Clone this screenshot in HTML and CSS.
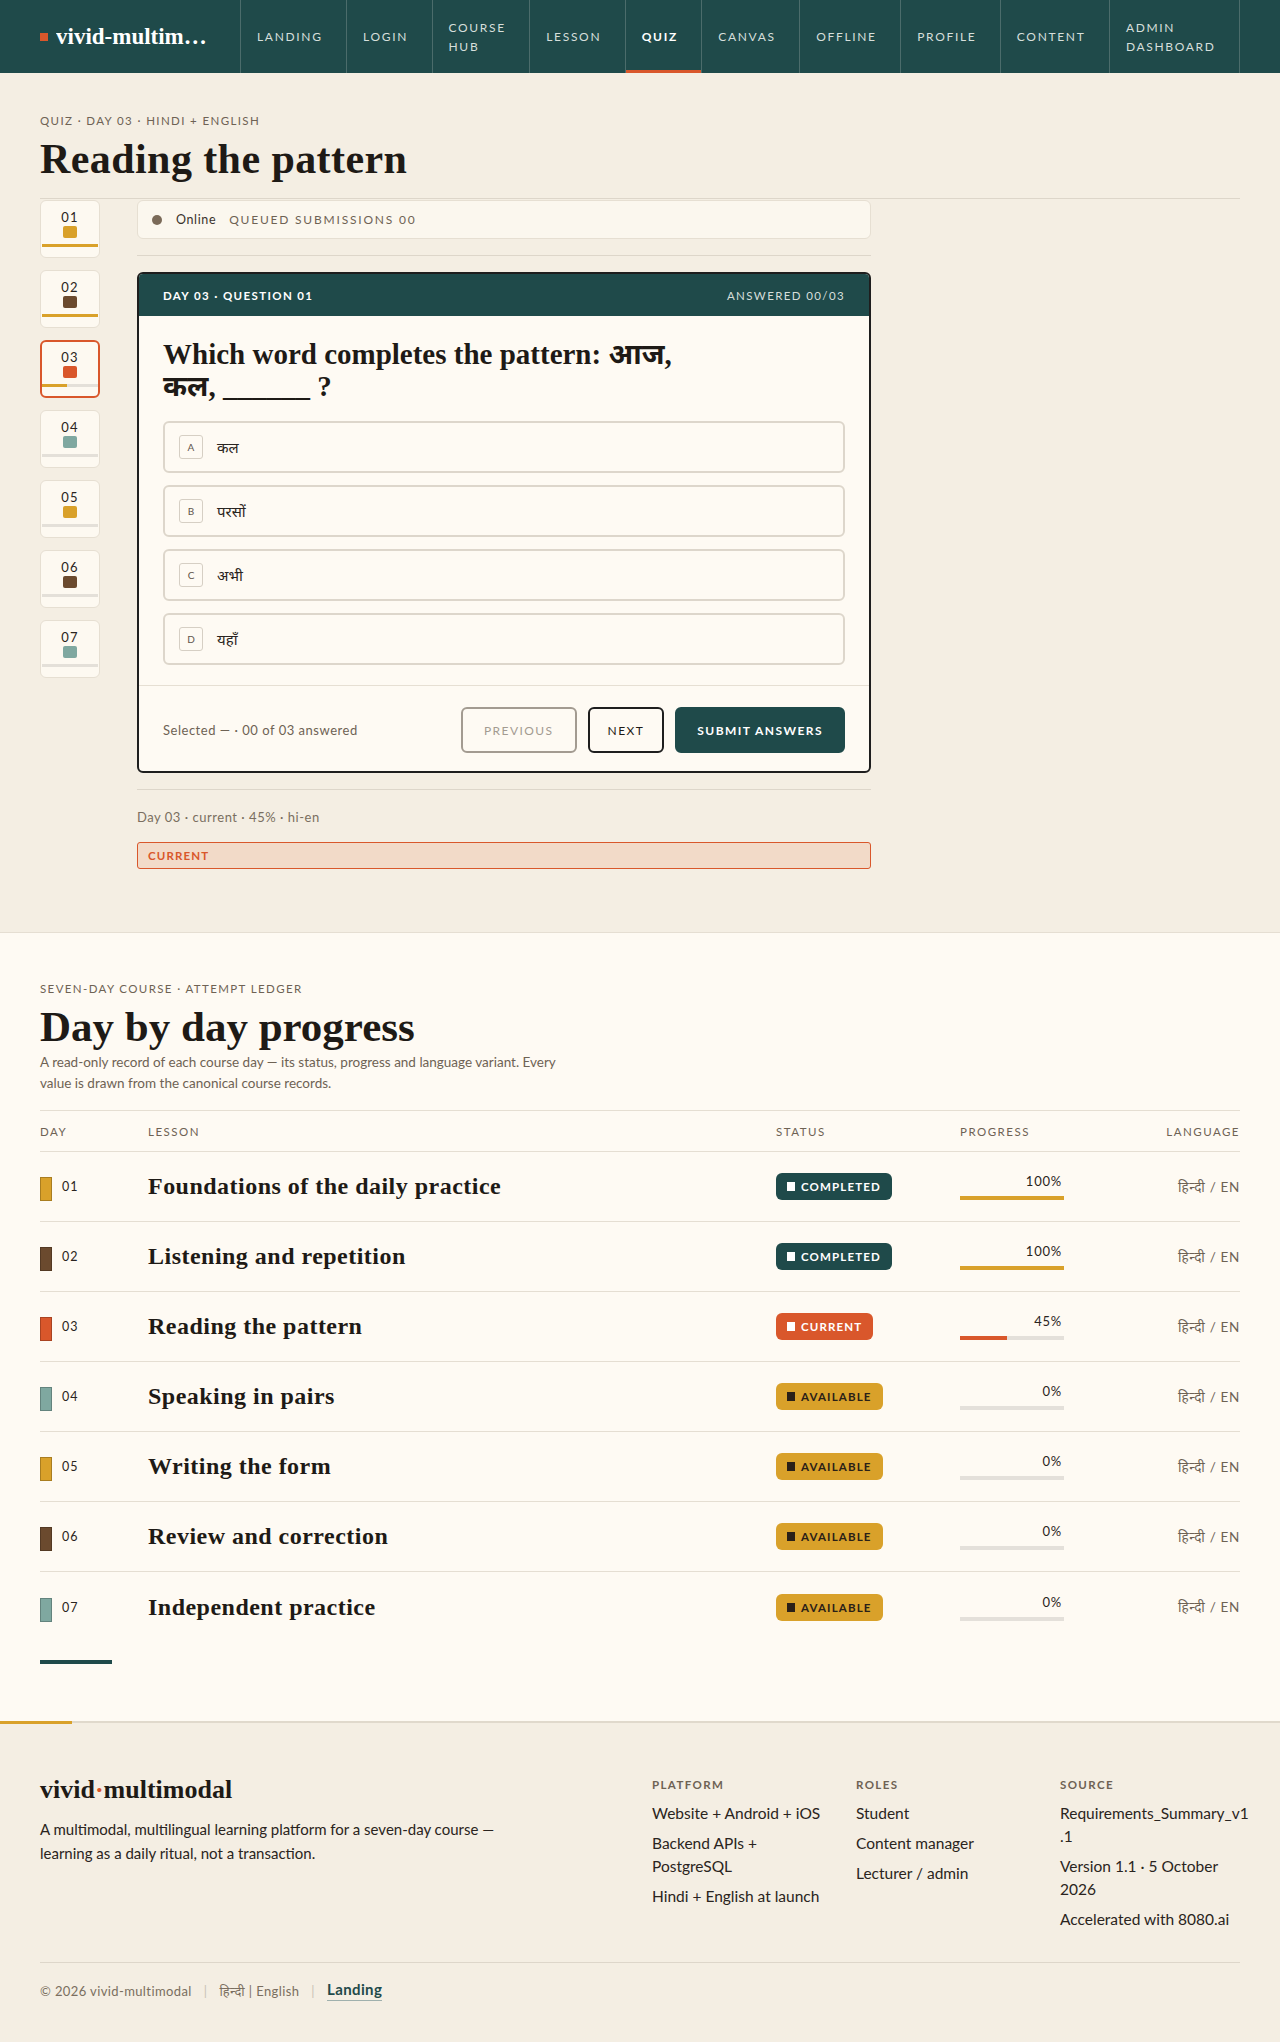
FILE: index.html
```html
<!DOCTYPE html>
<html lang="en">
<head>
    <meta charset="UTF-8">
    <meta name="viewport" content="width=device-width, initial-scale=1.0">
    <title>Quiz · Reading the pattern · vivid-multimodal</title>
    <link rel="stylesheet" href="styles.css">
</head>
<body>
    <header class="topbar">
        <div class="topbar-inner">
            <a class="brand" href="#"><span class="brand-mark"></span><span class="brand-name">vivid-multimodal</span></a>
            <nav class="nav">
                <a class="nav-link" href="#">Landing</a>
                <a class="nav-link" href="#">Login</a>
                <a class="nav-link" href="#">Course<br>Hub</a>
                <a class="nav-link" href="#">Lesson</a>
                <a class="nav-link active" href="#">Quiz</a>
                <a class="nav-link" href="#">Canvas</a>
                <a class="nav-link" href="#">Offline</a>
                <a class="nav-link" href="#">Profile</a>
                <a class="nav-link" href="#">Content</a>
                <a class="nav-link" href="#">Admin<br>Dashboard</a>
            </nav>
        </div>
    </header>

    <main>
        <section class="quiz-section">
            <div class="wrap">
                <div class="page-head">
                    <p class="eyebrow">Quiz · Day 03 · Hindi + English</p>
                    <h1 class="page-title">Reading the pattern</h1>
                </div>

                <div class="quiz-layout">
                    <ol class="day-rail">
                        <li class="day-tile">
                            <span class="day-tile-num">01</span>
                            <span class="day-tile-swatch c-mustard"></span>
                            <span class="day-tile-bar"><span class="day-tile-fill" style="width: 100%"></span></span>
                        </li>
                        <li class="day-tile">
                            <span class="day-tile-num">02</span>
                            <span class="day-tile-swatch c-brown"></span>
                            <span class="day-tile-bar"><span class="day-tile-fill" style="width: 100%"></span></span>
                        </li>
                        <li class="day-tile current">
                            <span class="day-tile-num">03</span>
                            <span class="day-tile-swatch c-orange"></span>
                            <span class="day-tile-bar"><span class="day-tile-fill" style="width: 45%"></span></span>
                        </li>
                        <li class="day-tile">
                            <span class="day-tile-num">04</span>
                            <span class="day-tile-swatch c-sage"></span>
                            <span class="day-tile-bar"></span>
                        </li>
                        <li class="day-tile">
                            <span class="day-tile-num">05</span>
                            <span class="day-tile-swatch c-mustard"></span>
                            <span class="day-tile-bar"></span>
                        </li>
                        <li class="day-tile">
                            <span class="day-tile-num">06</span>
                            <span class="day-tile-swatch c-brown"></span>
                            <span class="day-tile-bar"></span>
                        </li>
                        <li class="day-tile">
                            <span class="day-tile-num">07</span>
                            <span class="day-tile-swatch c-sage"></span>
                            <span class="day-tile-bar"></span>
                        </li>
                    </ol>

                    <div class="quiz-main">
                        <div class="status-strip">
                            <span class="status-dot"></span>
                            <span class="status-online">Online</span>
                            <span class="status-queue">Queued submissions 00</span>
                        </div>

                        <div class="rule"></div>

                        <article class="quiz-card">
                            <div class="quiz-card-head">
                                <span>Day 03 · Question 01</span>
                                <span class="quiz-card-count">Answered 00/03</span>
                            </div>
                            <div class="quiz-card-body">
                                <h2 class="question">Which word completes the pattern: आज, कल, ______ ?</h2>
                                <div class="options">
                                    <button class="option"><span class="option-key">A</span><span class="option-text">कल</span></button>
                                    <button class="option"><span class="option-key">B</span><span class="option-text">परसों</span></button>
                                    <button class="option"><span class="option-key">C</span><span class="option-text">अभी</span></button>
                                    <button class="option"><span class="option-key">D</span><span class="option-text">यहाँ</span></button>
                                </div>
                            </div>
                            <div class="quiz-card-foot">
                                <p class="selected-note">Selected — · 00 of 03 answered</p>
                                <div class="actions">
                                    <button class="btn btn-ghost" disabled>Previous</button>
                                    <button class="btn btn-outline">Next</button>
                                    <button class="btn btn-primary">Submit answers</button>
                                </div>
                            </div>
                        </article>

                        <div class="rule"></div>

                        <p class="meta">Day 03 · current · 45% · hi-en</p>
                        <div class="banner">Current</div>
                    </div>
                </div>
            </div>
        </section>

        <section class="ledger-section">
            <div class="wrap">
                <p class="eyebrow">Seven-day course · Attempt ledger</p>
                <h2 class="section-title">Day by day progress</h2>
                <p class="section-lead">A read-only record of each course day — its status, progress and language variant. Every value is drawn from the canonical course records.</p>

                <div class="ledger">
                    <div class="ledger-head">
                        <span>Day</span>
                        <span>Lesson</span>
                        <span>Status</span>
                        <span>Progress</span>
                        <span class="right">Language</span>
                    </div>

                    <div class="ledger-row">
                        <span class="day-cell"><span class="day-swatch c-mustard"></span>01</span>
                        <span class="lesson">Foundations of the daily practice</span>
                        <span><span class="badge badge-done">Completed</span></span>
                        <span class="progress"><span class="progress-num">100%</span><span class="progress-track"><span class="progress-fill" style="width: 100%"></span></span></span>
                        <span class="lang">हिन्दी / EN</span>
                    </div>
                    <div class="ledger-row">
                        <span class="day-cell"><span class="day-swatch c-brown"></span>02</span>
                        <span class="lesson">Listening and repetition</span>
                        <span><span class="badge badge-done">Completed</span></span>
                        <span class="progress"><span class="progress-num">100%</span><span class="progress-track"><span class="progress-fill" style="width: 100%"></span></span></span>
                        <span class="lang">हिन्दी / EN</span>
                    </div>
                    <div class="ledger-row">
                        <span class="day-cell"><span class="day-swatch c-orange"></span>03</span>
                        <span class="lesson">Reading the pattern</span>
                        <span><span class="badge badge-current">Current</span></span>
                        <span class="progress"><span class="progress-num">45%</span><span class="progress-track"><span class="progress-fill is-current" style="width: 45%"></span></span></span>
                        <span class="lang">हिन्दी / EN</span>
                    </div>
                    <div class="ledger-row">
                        <span class="day-cell"><span class="day-swatch c-sage"></span>04</span>
                        <span class="lesson">Speaking in pairs</span>
                        <span><span class="badge badge-open">Available</span></span>
                        <span class="progress"><span class="progress-num">0%</span><span class="progress-track"></span></span>
                        <span class="lang">हिन्दी / EN</span>
                    </div>
                    <div class="ledger-row">
                        <span class="day-cell"><span class="day-swatch c-mustard"></span>05</span>
                        <span class="lesson">Writing the form</span>
                        <span><span class="badge badge-open">Available</span></span>
                        <span class="progress"><span class="progress-num">0%</span><span class="progress-track"></span></span>
                        <span class="lang">हिन्दी / EN</span>
                    </div>
                    <div class="ledger-row">
                        <span class="day-cell"><span class="day-swatch c-brown"></span>06</span>
                        <span class="lesson">Review and correction</span>
                        <span><span class="badge badge-open">Available</span></span>
                        <span class="progress"><span class="progress-num">0%</span><span class="progress-track"></span></span>
                        <span class="lang">हिन्दी / EN</span>
                    </div>
                    <div class="ledger-row">
                        <span class="day-cell"><span class="day-swatch c-sage"></span>07</span>
                        <span class="lesson">Independent practice</span>
                        <span><span class="badge badge-open">Available</span></span>
                        <span class="progress"><span class="progress-num">0%</span><span class="progress-track"></span></span>
                        <span class="lang">हिन्दी / EN</span>
                    </div>
                </div>

                <div class="ledger-end"></div>
            </div>
        </section>
    </main>

    <footer class="footer">
        <div class="wrap">
            <div class="footer-grid">
                <div class="footer-about">
                    <p class="footer-brand">vivid<span class="footer-dot">·</span>multimodal</p>
                    <p class="footer-text">A multimodal, multilingual learning platform for a seven-day course — learning as a daily ritual, not a transaction.</p>
                </div>
                <div class="footer-col">
                    <h3>Platform</h3>
                    <ul>
                        <li>Website + Android + iOS</li>
                        <li>Backend APIs + PostgreSQL</li>
                        <li>Hindi + English at launch</li>
                    </ul>
                </div>
                <div class="footer-col">
                    <h3>Roles</h3>
                    <ul>
                        <li>Student</li>
                        <li>Content manager</li>
                        <li>Lecturer / admin</li>
                    </ul>
                </div>
                <div class="footer-col">
                    <h3>Source</h3>
                    <ul>
                        <li class="nowrap-part">Requirements_Summary_v1<wbr>.1</li>
                        <li>Version 1.1 · 5 October 2026</li>
                        <li>Accelerated with 8080.ai</li>
                    </ul>
                </div>
            </div>
            <div class="footer-bottom">
                <span>© 2026 vivid-multimodal</span>
                <span class="sep">|</span>
                <span>हिन्दी | English</span>
                <span class="sep">|</span>
                <a class="footer-link" href="#">Landing</a>
            </div>
        </div>
    </footer>
</body>
</html>
```

FILE: styles.css
```css
html {
    background-color: #f4eee3;
}
body {
    margin: 0;
    font-family: Lato, "Noto Sans", "Noto Sans Devanagari", sans-serif;
    background-color: #f4eee3;
    color: #2a2420;
}
a {
    color: inherit;
    text-decoration: none;
}
p, h1, h2, h3, ul, ol {
    margin: 0;
    padding: 0;
}
button {
    font-family: inherit;
}
.wrap {
    max-width: 1200px;
    margin: 0 auto;
    padding: 0 40px;
}

/* colour swatches */
.c-mustard { background-color: #d9a12a; }
.c-brown { background-color: #6b4a2e; }
.c-orange { background-color: #d9572b; }
.c-sage { background-color: #7fa8a0; }

/* top bar */
.topbar {
    background-color: #1f4a4a;
}
.topbar-inner {
    max-width: 1200px;
    margin: 0 auto;
    padding: 0 40px;
    display: flex;
    height: 73px;
}
.brand {
    flex: 0 0 200px;
    display: flex;
    align-items: center;
    gap: 8px;
    padding-right: 26px;
    box-sizing: border-box;
    min-width: 0;
}
.brand-mark {
    flex: none;
    width: 8px;
    height: 8px;
    background-color: #d9572b;
}
.brand-name {
    font-family: "Liberation Serif", serif;
    font-weight: bold;
    font-size: 23px;
    color: #fff;
    white-space: nowrap;
    overflow: hidden;
    text-overflow: ellipsis;
}
.nav {
    flex: 1;
    display: flex;
    border-right: 1px solid #4b6c6b;
}
.nav-link {
    flex: 1 1 auto;
    display: flex;
    align-items: center;
    padding: 0 16px;
    border-left: 1px solid #4b6c6b;
    font-size: 12px;
    line-height: 19px;
    letter-spacing: 0.14em;
    text-transform: uppercase;
    color: #d6dfdb;
    white-space: nowrap;
}
.nav-link.active {
    color: #fff;
    font-weight: bold;
    box-shadow: inset 0 -3px 0 #d9572b;
}

/* quiz section */
.quiz-section {
    padding: 40px 0 63px;
}
.eyebrow {
    font-size: 11.5px;
    line-height: 16px;
    letter-spacing: 0.12em;
    text-transform: uppercase;
    color: #6e6254;
}
.page-head {
    padding-bottom: 17px;
    border-bottom: 1px solid #ddd6ca;
}
.page-title {
    margin-top: 9px;
    font-family: "Liberation Serif", serif;
    font-size: 42px;
    line-height: 43px;
    letter-spacing: 0.01em;
    color: #1e1a16;
}
.quiz-layout {
    display: grid;
    grid-template-columns: 60px minmax(0, 734px);
    gap: 37px;
    margin-top: 1px;
}
.day-rail {
    list-style: none;
    display: flex;
    flex-direction: column;
    gap: 12px;
}
.day-tile {
    height: 58px;
    box-sizing: border-box;
    padding: 8px 1px 0;
    background-color: #fdf9f1;
    border: 1px solid #e6dfd2;
    border-radius: 6px;
    display: flex;
    flex-direction: column;
    align-items: center;
}
.day-tile.current {
    border: 2px solid #d9572b;
    padding: 7px 0 0;
}
.day-tile-num {
    font-size: 13px;
    line-height: 16px;
    letter-spacing: 0.1em;
    color: #2a2420;
}
.day-tile-swatch {
    width: 14px;
    height: 12px;
    border-radius: 2px;
    margin-top: 1px;
}
.day-tile-bar {
    align-self: stretch;
    height: 3px;
    margin-top: 6px;
    background-color: #e4e0d9;
}
.day-tile-fill {
    display: block;
    height: 100%;
    background-color: #d9a12a;
}

.status-strip {
    height: 39px;
    box-sizing: border-box;
    display: flex;
    align-items: center;
    padding: 0 14px;
    background-color: #fbf7ee;
    border: 1px solid #e6dfd2;
    border-radius: 6px;
    font-size: 12.5px;
}
.status-dot {
    width: 10px;
    height: 10px;
    border-radius: 50%;
    background-color: #7a6a58;
    margin-right: 14px;
}
.status-online {
    color: #3a322b;
    letter-spacing: 0.05em;
    margin-right: 13px;
}
.status-queue {
    color: #6e6254;
    font-size: 12px;
    letter-spacing: 0.15em;
    text-transform: uppercase;
}
.rule {
    height: 1px;
    background-color: #ddd6ca;
    margin: 16px 0;
}

.quiz-card {
    border: 2px solid #1e1e1e;
    border-radius: 6px;
    background-color: #fefaf3;
    overflow: hidden;
}
.quiz-card-head {
    height: 42px;
    display: flex;
    align-items: center;
    justify-content: space-between;
    padding: 0 24px;
    background-color: #1f4a4a;
    color: #fff;
    font-size: 11.5px;
    font-weight: bold;
    letter-spacing: 0.12em;
    text-transform: uppercase;
}
.quiz-card-count {
    font-weight: normal;
    color: #d6dfdb;
}
.quiz-card-body {
    padding: 22px 24px 20px;
}
.question {
    max-width: 545px;
    font-family: "Liberation Serif", "Noto Sans Devanagari", serif;
    font-size: 29px;
    line-height: 32px;
    color: #1e1a16;
}
.options {
    margin-top: 19px;
    display: flex;
    flex-direction: column;
    gap: 12px;
}
.option {
    display: flex;
    align-items: center;
    gap: 14px;
    height: 52px;
    box-sizing: border-box;
    padding: 0 14px;
    background-color: #fefaf3;
    border: 2px solid #ddd6cb;
    border-radius: 6px;
    text-align: left;
    cursor: pointer;
}
.option-key {
    width: 24px;
    height: 24px;
    box-sizing: border-box;
    display: flex;
    align-items: center;
    justify-content: center;
    border: 1px solid #d6cfc4;
    border-radius: 3px;
    font-size: 10px;
    color: #5e554b;
}
.option-text {
    font-size: 15px;
    color: #2a2420;
}
.quiz-card-foot {
    border-top: 1px solid #e6dfd3;
    padding: 21px 24px 18px;
    display: flex;
    align-items: center;
    justify-content: space-between;
}
.selected-note {
    font-size: 13px;
    color: #6e6254;
    letter-spacing: 0.04em;
}
.actions {
    display: flex;
    gap: 11px;
}
.btn {
    height: 46px;
    padding: 0 20px;
    border-radius: 6px;
    font-size: 12px;
    letter-spacing: 0.12em;
    text-transform: uppercase;
    cursor: pointer;
}
.btn-ghost {
    background: transparent;
    border: 2px solid #a39b91;
    color: #a39b91;
    padding: 0 21px;
}
.btn-outline {
    background: transparent;
    border: 2px solid #1e1e1e;
    color: #1e1a16;
    padding: 0 18px;
}
.btn-primary {
    background-color: #1f4a4a;
    border: 2px solid #1f4a4a;
    color: #fff;
    font-weight: bold;
}
.meta {
    margin-top: 18px;
    font-size: 13px;
    line-height: 18px;
    letter-spacing: 0.04em;
    color: #7a6e60;
}
.banner {
    margin-top: 16px;
    height: 27px;
    box-sizing: border-box;
    display: flex;
    align-items: center;
    padding: 0 10px;
    background-color: #f2dac8;
    border: 1px solid #d9572b;
    border-radius: 3px;
    color: #d9572b;
    font-size: 11.5px;
    font-weight: bold;
    letter-spacing: 0.1em;
    text-transform: uppercase;
}

/* ledger */
.ledger-section {
    background-color: #fefaf3;
    border-top: 1px solid #e5ded2;
    padding: 48px 0 57px;
}
.section-title {
    margin-top: 7px;
    font-family: "Liberation Serif", serif;
    font-size: 43px;
    line-height: 46px;
    color: #1e1a16;
}
.section-lead {
    margin-top: 2px;
    max-width: 525px;
    font-size: 13.5px;
    line-height: 21px;
    color: #6e6254;
}
.ledger {
    margin-top: 16px;
}
.ledger-head,
.ledger-row {
    display: grid;
    grid-template-columns: 108px 1fr 184px 104px 176px;
    align-items: center;
}
.ledger-head {
    height: 42px;
    box-sizing: border-box;
    border-top: 1px solid #e5ded2;
    border-bottom: 1px solid #e5ded2;
    font-size: 11.5px;
    letter-spacing: 0.13em;
    text-transform: uppercase;
    color: #6e6254;
}
.ledger-head .right {
    text-align: right;
}
.ledger-row {
    height: 70px;
    box-sizing: border-box;
    border-bottom: 1px solid #e5ded2;
}
.ledger-row:last-child {
    border-bottom: none;
}
.day-cell {
    display: flex;
    align-items: center;
    gap: 10px;
    font-size: 12.5px;
    letter-spacing: 0.08em;
    color: #2a2420;
}
.day-swatch {
    width: 12px;
    height: 24px;
    box-sizing: border-box;
    border: 1px solid rgba(0, 0, 0, 0.22);
    margin-top: 5px;
}
.lesson {
    font-family: "Liberation Serif", serif;
    font-weight: bold;
    font-size: 24px;
    letter-spacing: 0.02em;
    color: #1e1a16;
}
.badge {
    display: inline-flex;
    align-items: center;
    gap: 6px;
    height: 27px;
    padding: 0 11px;
    border-radius: 6px;
    font-size: 11.5px;
    font-weight: bold;
    letter-spacing: 0.1em;
    text-transform: uppercase;
    vertical-align: middle;
}
.badge::before {
    content: "";
    width: 8px;
    height: 9px;
    background-color: currentColor;
}
.badge-done {
    background-color: #1f4a4a;
    color: #fff;
}
.badge-current {
    background-color: #d9572b;
    color: #fff;
}
.badge-open {
    background-color: #d9a12a;
    color: #2a2018;
}
.progress {
    display: flex;
    flex-direction: column;
    align-items: flex-end;
    gap: 7px;
}
.progress-num {
    font-size: 13px;
    line-height: 16px;
    letter-spacing: 0.06em;
    padding-right: 2px;
}
.progress-track {
    width: 104px;
    height: 4px;
    background-color: #e4e0da;
}
.progress-fill {
    display: block;
    height: 100%;
    background-color: #d9a12a;
}
.progress-fill.is-current {
    background-color: #d9572b;
}
.lang {
    text-align: right;
    font-size: 13.5px;
    letter-spacing: 0.05em;
    color: #6e6254;
}
.ledger-end {
    width: 72px;
    height: 4px;
    margin-top: 18px;
    background-color: #1f4a4a;
}

/* footer */
.footer {
    position: relative;
    border-top: 2px solid #e0d9cc;
    padding-top: 52px;
}
.footer::before {
    content: "";
    position: absolute;
    top: -2px;
    left: 0;
    width: 72px;
    height: 3px;
    background-color: #d9a12a;
}
.footer-grid {
    display: grid;
    grid-template-columns: 1fr 180px 180px 180px;
    gap: 24px;
}
.footer-brand {
    font-family: "Liberation Serif", serif;
    font-weight: bold;
    font-size: 26px;
    line-height: 30px;
    color: #1e1a16;
}
.footer-dot {
    color: #d9572b;
}
.footer-text {
    margin-top: 12px;
    max-width: 480px;
    font-size: 15px;
    line-height: 24px;
    color: #2a2420;
}
.footer-col h3 {
    margin-top: 2px;
    font-size: 11.5px;
    line-height: 16px;
    font-weight: bold;
    letter-spacing: 0.12em;
    text-transform: uppercase;
    color: #6e6254;
}
.footer-col ul {
    list-style: none;
    margin-top: 9px;
    display: flex;
    flex-direction: column;
    gap: 7px;
}
.footer-col li {
    font-size: 15.5px;
    line-height: 23px;
    color: #2a2420;
}
.footer-col li.nowrap-part {
    white-space: nowrap;
}
.footer-bottom {
    margin-top: 31px;
    border-top: 1px solid #ddd6ca;
    padding: 17px 0 38px;
    display: flex;
    align-items: center;
    gap: 12px;
    font-size: 13px;
    line-height: 18px;
    letter-spacing: 0.03em;
    color: #7a6e60;
}
.footer-bottom .sep {
    color: #c9c1b5;
}
.footer-link {
    font-size: 15px;
    font-weight: bold;
    color: #1f4a4a;
    border-bottom: 1px solid #9fb0ad;
    padding-bottom: 2px;
}
```
